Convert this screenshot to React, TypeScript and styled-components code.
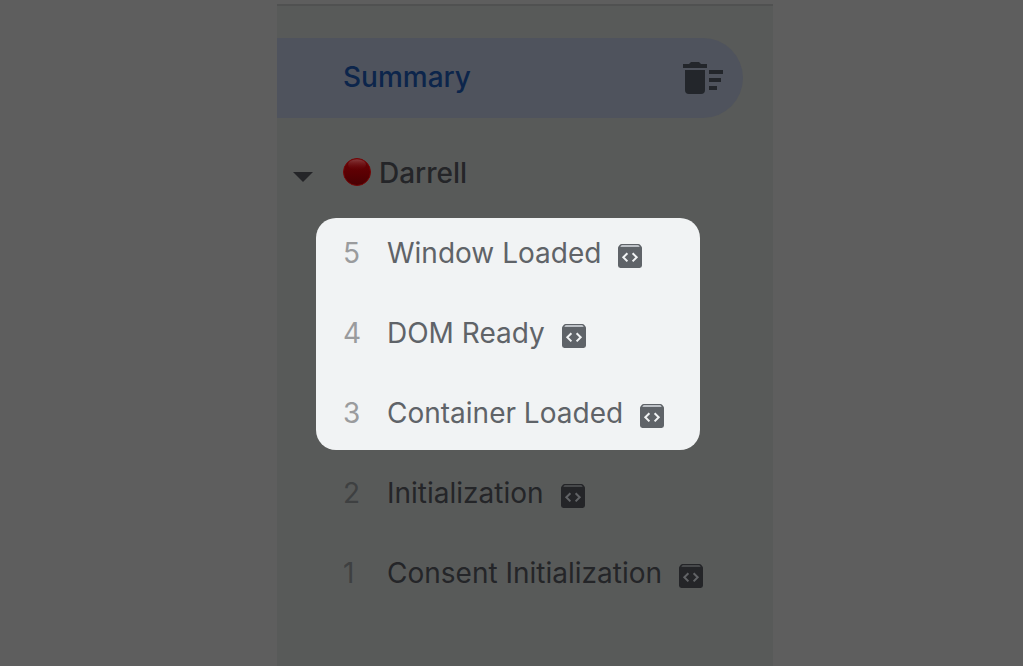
import React from "react";
import styled, { createGlobalStyle } from "styled-components";

const GlobalStyle = createGlobalStyle`
  *, *::before, *::after { box-sizing: border-box; }
  body {
    margin: 0;
    background: #5e5e5e;
    font-family: Inter, "Liberation Sans", sans-serif;
  }
  button {
    margin: 0;
    padding: 0;
    border: 0;
    background: none;
    color: inherit;
    font: inherit;
    text-align: left;
    cursor: pointer;
  }
`;

const Page = styled.main`
  display: grid;
  grid-template-columns: minmax(0, 277fr) minmax(320px, 496px) minmax(0, 250fr);
  min-height: 100vh;
  padding-top: 4px;
`;

const Panel = styled.nav`
  grid-column: 2;
  display: flex;
  flex-direction: column;
  padding: 32px 0 48px;
  border-top: 2px solid #505151;
  background: #585a59;
  color: #242528;
  font-size: 28px;
  line-height: 36px;
`;

const SummaryRow = styled.div`
  display: flex;
  align-items: center;
  justify-content: space-between;
  height: 80px;
  margin-right: 30px;
  padding: 0 20px 0 66px;
  border-radius: 0 40px 40px 0;
  background: #4f535d;
`;

const SummaryButton = styled.button`
  flex: 1;
  padding-bottom: 2px;
  color: #0c254b;
  font-weight: 500;
`;

const ClearButton = styled.button`
  display: flex;
  color: #23262b;
`;

const GroupRow = styled.div`
  display: flex;
  align-items: center;
  height: 72px;
  margin: 20px 0 8px;
  padding-left: 16px;
`;

const ToggleButton = styled.button`
  display: flex;
  width: 50px;
  padding-top: 6px;
`;

const GroupName = styled.span`
  display: flex;
  align-items: center;
  gap: 8px;
  padding-bottom: 2px;
  font-weight: 500;
`;

const GroupDot = styled.svg`
  margin-bottom: 2px;
`;

const EventList = styled.ol<{ $active?: boolean }>`
  display: flex;
  flex-direction: column;
  gap: 8px;
  margin: ${(p) => (p.$active ? "0 73px 0 39px" : "8px 0 0 39px")};
  padding: 0 0 0 27px;
  list-style: none;
  border-radius: 20px;
  background: ${(p) => (p.$active ? "#f1f3f4" : "transparent")};
  color: ${(p) => (p.$active ? "#5f6368" : "#242528")};
  --number: ${(p) => (p.$active ? "#9a9b9d" : "#3e4041")};
  --lid: ${(p) => (p.$active ? "#bdc1c6" : "#47494b")};
  --code: ${(p) => (p.$active ? "#f1f3f4" : "#616366")};
`;

const EventButton = styled.button`
  display: flex;
  align-items: center;
  height: 72px;
  padding-bottom: 2px;
  white-space: nowrap;
`;

const EventNumber = styled.span`
  width: 44px;
  color: var(--number);
`;

const EventIcon = styled.svg`
  flex: none;
  margin: 6px 0 0 17px;
`;

const BoxIcon = () => (
  <EventIcon width="24" height="24" viewBox="0 0 24 24" aria-hidden="true">
    <path
      fill="currentColor"
      d="M3.6 0H20.4Q21.4 0 22.1.8L23.5 2.5Q24 3.1 24 4V21.6Q24 24 21.6 24H2.4Q0 24 0 21.6V4Q0 3.1.5 2.5L1.9.8Q2.6 0 3.6 0Z"
    />
    <path fill="var(--lid)" d="M3.8 1H20.2Q21.2 1.4 21.7 3H2.3Q2.8 1.4 3.8 1Z" />
    <path
      fill="none"
      stroke="var(--code)"
      strokeWidth="2"
      d="M9.4 9.2L5.3 13.3L9.4 17.4M14.6 9.2L18.7 13.3L14.6 17.4"
    />
  </EventIcon>
);

const ClearIcon = () => (
  <svg width="40" height="32" viewBox="0 0 40 32" aria-hidden="true">
    <path
      fill="currentColor"
      d="M0 2H6L8 0H16L18 2H24V6H0ZM2 8H22V28Q22 32 18 32H6Q2 32 2 28ZM26 8H40V12H26ZM26 16H38V20H26ZM26 24H34V28H26Z"
    />
  </svg>
);

const CaretIcon = () => (
  <svg width="20" height="10" viewBox="0 0 20 10" aria-hidden="true">
    <path fill="currentColor" d="M0 0H20L10 10Z" />
  </svg>
);

const RedDot = () => (
  <GroupDot width="28" height="28" viewBox="0 0 28 28" aria-hidden="true">
    <defs>
      <linearGradient id="dot" x1="0" y1="0" x2="0" y2="1">
        <stop offset="0" stopColor="#690406" />
        <stop offset="0.5" stopColor="#5c0003" />
        <stop offset="1" stopColor="#480002" />
      </linearGradient>
      <linearGradient id="shine" x1="0" y1="0" x2="0" y2="1">
        <stop offset="0" stopColor="#853b3d" />
        <stop offset="1" stopColor="#690b0d" stopOpacity="0" />
      </linearGradient>
    </defs>
    <circle cx="14" cy="14" r="13.5" fill="url(#dot)" stroke="#750607" />
    <ellipse cx="14" cy="6.6" rx="9" ry="5.4" fill="url(#shine)" />
  </GroupDot>
);

type Item = { id: number; name: string };

const loaded: Item[] = [
  { id: 5, name: "Window Loaded" },
  { id: 4, name: "DOM Ready" },
  { id: 3, name: "Container Loaded" },
];

const initial: Item[] = [
  { id: 2, name: "Initialization" },
  { id: 1, name: "Consent Initialization" },
];

const Events = ({ items, active }: { items: Item[]; active?: boolean }) => (
  <EventList $active={active}>
    {items.map((item) => (
      <li key={item.id}>
        <EventButton type="button">
          <EventNumber>{item.id}</EventNumber>
          {item.name}
          <BoxIcon />
        </EventButton>
      </li>
    ))}
  </EventList>
);

export default function App() {
  return (
    <>
      <GlobalStyle />
      <Page>
        <Panel aria-label="Events">
          <SummaryRow>
            <SummaryButton type="button">Summary</SummaryButton>
            <ClearButton type="button" aria-label="Clear events">
              <ClearIcon />
            </ClearButton>
          </SummaryRow>
          <GroupRow>
            <ToggleButton type="button" aria-label="Toggle Darrell" aria-expanded="true">
              <CaretIcon />
            </ToggleButton>
            <GroupName>
              <RedDot />
              Darrell
            </GroupName>
          </GroupRow>
          <Events items={loaded} active />
          <Events items={initial} />
        </Panel>
      </Page>
    </>
  );
}
